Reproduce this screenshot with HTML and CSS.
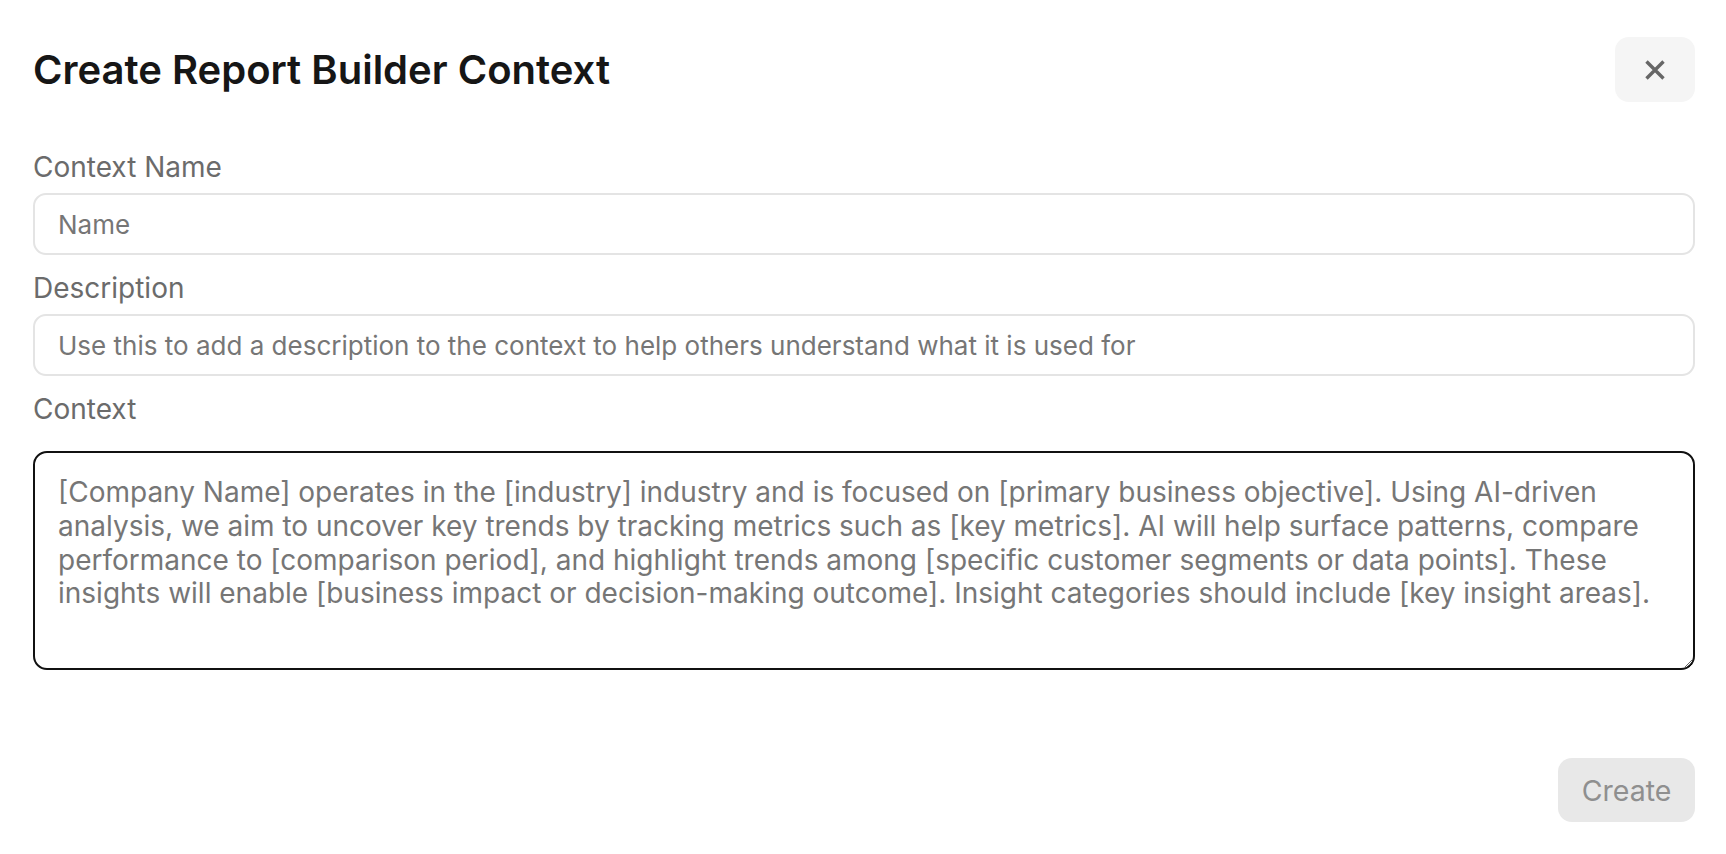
FILE: index.html
```html
<!DOCTYPE html>
<html lang="en">
<head>
<meta charset="utf-8">
<title>Create Report Builder Context</title>
<link rel="stylesheet" href="styles.css">
</head>
<body>
<div class="dialog">
  <div class="header">
    <h1 class="title">Create Report Builder Context</h1>
    <button class="close" type="button" aria-label="Close">
      <svg width="22" height="22" viewBox="0 0 22 22" fill="none" stroke="#666" stroke-width="3.4" stroke-linecap="butt">
        <path d="M2.5 2.5 L19.5 19.5 M19.5 2.5 L2.5 19.5"/>
      </svg>
    </button>
  </div>
  <form class="form">
    <div class="field">
      <label class="label" for="name">Context Name</label>
      <input class="input" id="name" type="text" placeholder="Name">
    </div>
    <div class="field">
      <label class="label" for="desc">Description</label>
      <input class="input" id="desc" type="text" placeholder="Use this to add a description to the context to help others understand what it is used for">
    </div>
    <div class="field">
      <label class="label label-context" for="ctx">Context</label>
      <textarea class="textarea" id="ctx" placeholder="[Company Name] operates in the [industry] industry and is focused on [primary business objective]. Using AI-driven analysis, we aim to uncover key trends by tracking metrics such as [key metrics]. AI will help surface patterns, compare performance to [comparison period], and highlight trends among [specific customer segments or data points]. These insights will enable [business impact or decision-making outcome]. Insight categories should include [key insight areas]."></textarea>
    </div>
    <div class="actions">
      <button class="create" type="button" disabled>Create</button>
    </div>
  </form>
</div>
</body>
</html>
```

FILE: styles.css
```css
html, body {
  margin: 0;
  padding: 0;
  background: #ffffff;
}

body {
  font-family: Inter, "Liberation Sans", Arial, sans-serif;
  color: #1a1a1a;
}

.dialog {
  padding: 37px 31px 0 33px;
  display: flex;
  flex-direction: column;
}

.header {
  display: flex;
  align-items: center;
  justify-content: space-between;
  height: 65px;
}

.title {
  margin: 0;
  font-family: Inter, "Liberation Sans", Arial, sans-serif;
  font-size: 40px;
  font-weight: 600;
  line-height: 48px;
  color: #161616;
}

.close {
  width: 80px;
  height: 65px;
  border: none;
  border-radius: 14px;
  background: #f5f5f5;
  display: flex;
  align-items: center;
  justify-content: center;
  padding: 0;
  cursor: pointer;
}

.form {
  margin: 48px 0 0;
  display: flex;
  flex-direction: column;
}

.field {
  display: flex;
  flex-direction: column;
}

.field + .field {
  margin-top: 16px;
}

.label {
  font-family: Inter, "Liberation Sans", Arial, sans-serif;
  font-size: 28px;
  line-height: 34px;
  color: #6b6b6b;
  margin-bottom: 9px;
}

.label-context {
  margin-bottom: 25px;
}

.input {
  box-sizing: border-box;
  height: 62px;
  width: 100%;
  border: 2px solid #e4e4e4;
  border-radius: 13px;
  padding: 0 23px;
  font-family: Inter, "Liberation Sans", Arial, sans-serif;
  font-size: 26px;
  color: #333;
  outline: none;
  background: #fff;
}

.input::placeholder,
.textarea::placeholder {
  color: #767676;
  opacity: 1;
}

.textarea {
  box-sizing: border-box;
  height: 219px;
  width: 100%;
  border: 2px solid #111;
  border-radius: 14px;
  padding: 23px 36px 18px 23px;
  font-family: Inter, "Liberation Sans", Arial, sans-serif;
  font-size: 28px;
  line-height: 33.8px;
  color: #333;
  outline: none;
  background: #fff;
  resize: vertical;
}

.actions {
  display: flex;
  justify-content: flex-end;
  margin-top: 88px;
}

.create {
  width: 137px;
  height: 64px;
  border: none;
  border-radius: 14px;
  background: #e8e8e8;
  color: #8f8f8f;
  font-family: Inter, "Liberation Sans", Arial, sans-serif;
  font-size: 28.5px;
  padding: 0;
}
```
